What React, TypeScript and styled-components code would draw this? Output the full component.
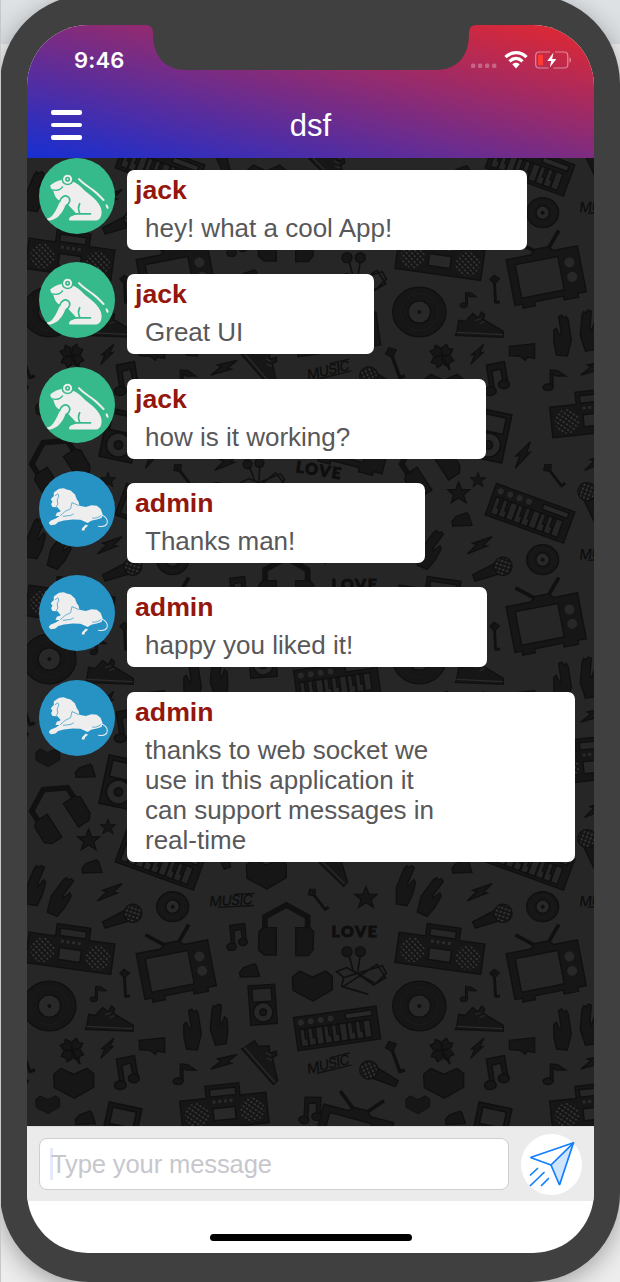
import React from "react";
import styled, { createGlobalStyle } from "styled-components";

const sans = `"Liberation Sans", Arial, Helvetica, sans-serif`;

const GlobalStyle = createGlobalStyle`
  *, *::before, *::after { box-sizing: border-box; }
  html, body { margin: 0; padding: 0; }
  body {
    width: 620px;
    height: 1282px;
    overflow: hidden;
    font-family: ${sans};
    background: linear-gradient(#dfe2e5 0, #dadde0 44px, #efefef 44px, #ededed 100%);
  }
`;

const Desktop = styled.div`
  height: 1282px;
  overflow: hidden;
  border-left: 1px solid #c6c8ca;
`;

const Device = styled.main`
  width: 620px;
  height: 1287px;
  margin: -5px 0 0 -1px;
  padding: 30px 26px 29px 27px;
  border-radius: 89px;
  background: #404040;
  box-shadow: 0 6px 24px rgba(0, 0, 0, 0.32);
`;

const Screen = styled.div`
  position: relative;
  display: flex;
  flex-direction: column;
  width: 567px;
  height: 1228px;
  overflow: hidden;
  border-radius: 61px;
  background: #fff;
`;

const Header = styled.header`
  height: 133px;
  flex: none;
  display: flex;
  flex-direction: column;
  background: linear-gradient(to top right, #162fd2, #e5282e);
  color: #fff;
`;

const StatusBar = styled.div`
  height: 67px;
  padding: 2px 21px 0 47px;
  display: flex;
  align-items: center;
  justify-content: space-between;
`;

const Clock = styled.time`
  font: 600 22px/28px Inter, sans-serif;
  letter-spacing: 0.2px;
`;

const TitleBar = styled.div`
  height: 66px;
  display: grid;
  grid-template-columns: 80px 1fr 80px;
  align-items: center;
`;

const MenuButton = styled.button`
  display: flex;
  flex-direction: column;
  gap: 8px;
  width: 31px;
  margin: 0 0 0 24px;
  padding: 0;
  border: 0;
  background: none;
`;

const MenuLine = styled.span`
  height: 4.7px;
  border-radius: 2px;
  background: #fff;
`;

const Title = styled.h1`
  margin: 1px 0 0;
  text-align: center;
  font-size: 31px;
  font-weight: 400;
`;

const Notch = styled.svg`
  position: absolute;
  top: 0;
  left: 118px;
`;

const Chat = styled.section`
  position: relative;
  height: 968px;
  flex: none;
  overflow: hidden;
  background: #262626;
`;

const Wallpaper = styled.svg`
  position: absolute;
  inset: 0;
`;

const MessageList = styled.ul`
  position: relative;
  margin: 0;
  padding: 0 0 0 12px;
  list-style: none;
`;

const MessageRow = styled.li`
  display: flex;
  align-items: flex-start;
  gap: 12px;
  margin-bottom: 12.35px;
`;

const Avatar = styled.svg`
  flex: none;
  width: 76px;
  height: 76px;
  border-radius: 50%;
`;

const Bubble = styled.div<{ $width: number }>`
  width: ${(p) => p.$width}px;
  flex: none;
  margin-top: 12px;
  padding: 5px 8px 7px;
  border-radius: 7px;
  background: #fff;
`;

const Author = styled.div`
  font-size: 26.7px;
  line-height: 30px;
  font-weight: 700;
  color: #93160f;
`;

const MessageText = styled.p`
  margin: 8px 0 0 10px;
  max-width: 310px;
  font-size: 26px;
  line-height: 30px;
  color: #58585a;
`;

const Composer = styled.form`
  height: 75px;
  flex: none;
  display: flex;
  align-items: center;
  gap: 12px;
  padding: 0 12px;
  background: #ebebeb;
  border-top: 1px solid #dcdcdc;
`;

const Field = styled.div`
  width: 470px;
  height: 52px;
  display: flex;
  align-items: center;
  padding: 0 10px;
  border: 1px solid #cfcfcf;
  border-radius: 8px;
  background: #fff;
`;

const Caret = styled.span`
  width: 3px;
  height: 32px;
  margin-right: -2px;
  background: #e4eafb;
`;

const Placeholder = styled.span`
  font-size: 25.6px;
  letter-spacing: -0.15px;
  padding-top: 1px;
  color: #c7c7cd;
`;

const SendButton = styled.button`
  width: 61px;
  height: 61px;
  flex: none;
  padding: 0;
  border: 0;
  border-radius: 50%;
  background: #fff;
`;

const HomeArea = styled.footer`
  flex: 1;
  display: flex;
  justify-content: center;
  align-items: flex-end;
  padding-bottom: 12px;
`;

const HomeIndicator = styled.div`
  width: 202px;
  height: 7.5px;
  border-radius: 4px;
  background: #000;
`;

/* ---------- wallpaper motifs, drawn around their own centre ---------- */

type Place = { x: number; y: number; r?: number; s?: number };

const at = ({ x, y, r = 0, s = 1 }: Place) => `translate(${x} ${y}) rotate(${r}) scale(${s})`;

const Vinyl = ({ size, ...p }: Place & { size: number }) => (
  <g transform={at(p)}>
    <ellipse rx={size} ry={size * 0.93} />
    <circle r={size * 0.7} fill="none" stroke="#1b1b1b" strokeWidth="3" />
    <circle r={size * 0.42} fill="#282828" />
    <circle r="4" />
  </g>
);

const Television = (p: Place) => (
  <g transform={at(p)}>
    <path d="M-20 -80L-72 -122M20 -80L62 -128" strokeWidth="11" />
    <path d="M-110 -72H-35L-18 -86H22L36 -72H108V68H82V80H38V68H-50V80H-88V68H-110Z" />
    <rect x="-86" y="-52" width="130" height="102" fill="#262626" />
    <circle cx="75" cy="-28" r="15" fill="#282828" stroke="none" />
    <circle cx="75" cy="16" r="15" fill="#282828" stroke="none" />
  </g>
);

const Boombox = (p: Place) => (
  <g transform={at(p)}>
    <path fillRule="evenodd" d="M-130 -45H-50V-82H52V-45H130V47H-130ZM-38 -70H40V-48H-38Z" />
    <circle cx="-82" r="37" cy="2" fill="url(#mesh)" stroke="none" />
    <circle cx="84" r="37" cy="2" fill="url(#mesh)" stroke="none" />
    <path d="M-32 -32H36" stroke="#2b2b2b" strokeWidth="9" strokeDasharray="9 8" />
    <rect x="-33" y="-12" width="66" height="36" fill="#282828" />
  </g>
);

const Microphone = (p: Place) => (
  <g transform={at(p)}>
    <path d="M-64 -10L15 -18V18L-64 10Z" />
    <circle cx="30" r="27" />
    <circle cx="30" r="25" fill="url(#mesh)" stroke="none" />
  </g>
);

const Keyboard = (p: Place) => (
  <g transform={at(p)}>
    <rect x="-125" y="-50" width="250" height="100" />
    <rect x="30" y="-40" width="80" height="16" fill="#282828" />
    {[-105, -75, -45, -15].map((x) => (
      <circle key={x} cx={x} cy="-32" r="9" fill="#282828" stroke="none" />
    ))}
    {[-112, -88, -64, -40, -16, 8, 32, 56, 80].map((x, i) => (
      <g key={x}>
        <rect x={x} y="-12" width="21" height="52" fill="#252525" />
        {i % 3 !== 2 && <rect x={x + 14} y="-12" width="13" height="30" />}
      </g>
    ))}
  </g>
);

const Headphones = (p: Place) => (
  <g transform={at(p)}>
    <path d="M-64 15V-45L0 -80L64 -45V15" fill="none" stroke="#111" strokeWidth="17" />
    <path d="M-82 0L-70 -12H-30V70H-66L-84 55ZM82 0L70 -12H28V72H66L80 55Z" />
  </g>
);

const Ipod = (p: Place) => (
  <g transform={at(p)}>
    <rect x="-40" y="-60" width="80" height="118" />
    <rect x="-29" y="-50" width="58" height="40" fill="#262626" />
    <circle cy="22" r="29" fill="#272727" />
    <circle cy="22" r="10" />
  </g>
);

const Shoe = (p: Place) => (
  <g transform={at(p)}>
    <path d="M-68 22L-62 -15L-42 -12L-20 -36L-3 -22L6 -40L16 -32L12 -18L72 18V36L-72 30Z" />
    <path d="M-68 21L70 28" stroke="#2b2b2b" strokeWidth="4" />
    <path d="M-12 -14L4 -20M0 -4L16 -12" stroke="#292929" strokeWidth="4" />
  </g>
);

const HandLeft = (p: Place) => (
  <path
    transform={at(p)}
    d="M-28 55L-28 5L-4 -52L4 -60L8 -54L18 -60L26 -54L6 -6L8 2L24 -18L30 -10L20 28L4 60Z"
  />
);

const HeartShape = (p: Place) => <path transform={at(p)} d="M-60 -28L-38 -46L0 -28L40 -46L60 -30V10L2 44L-58 12Z" />;

const Bolt = (p: Place) => <path transform={at(p)} d="M-36 26L-8 -2L-20 -6L38 -26L12 0L24 2Z" />;

const Beacon = (p: Place) => <path transform={at(p)} d="M-30 2L-18 -12L14 -24L20 -18L30 14L-28 16Z" />;

const Horn = (p: Place) => <path transform={at(p)} d="M-38 -14L38 -22V22L16 18L10 28L-6 16L-38 14Z" />;

const Star = (p: Place) => (
  <path transform={at(p)} d="M0 -33L9 -10L33 -10L15 6L22 29L0 15L-22 29L-15 6L-33 -10L-9 -10Z" />
);

const Key = (p: Place) => (
  <g transform={at(p)}>
    <path d="M-16 -48L0 -62L18 -48L0 -30Z" />
    <path d="M0 -34V38M2 34H16" strokeWidth="10" />
    <circle cy="-48" r="4" fill="#292929" />
  </g>
);

const TwinNote = (p: Place) => (
  <g transform={at(p)}>
    <path d="M-16 34L-22 -38L28 -44L34 22H22L16 -24L-8 -20L-4 34Z" />
    <ellipse cx="-16" cy="34" rx="16" ry="12" />
    <ellipse cx="22" cy="18" rx="15" ry="12" />
  </g>
);

const Note = (p: Place) => (
  <g transform={at(p)}>
    <path d="M-10 24V-28L12 -26L36 -10H8L-2 -16V24Z" />
    <ellipse cx="-17" cy="24" rx="15" ry="10" />
  </g>
);

const Clover = (p: Place) => (
  <g transform={at(p)}>
    {[0, 90, 180, 270].map((a) => (
      <path key={a} transform={`rotate(${a + 40})`} d="M0 0L-16 -20L-12 -36L0 -30L12 -36L16 -20Z" />
    ))}
    <path d="M0 0L24 42" strokeWidth="7" />
  </g>
);

const Tangle = (p: Place) => (
  <g transform={at(p)}>
    <circle cx="-40" cy="-60" r="15" />
    <circle cx="0" cy="-60" r="15" />
    <path
      d="M-34 -50L-22 -5M0 -50L-8 0M-74 0L-40 -12L46 36L78 4L66 -18L-50 18L-70 0M-50 18L-56 44L24 68M-50 44L50 -22L76 18L40 40L-20 -2"
      fill="none"
      strokeWidth="5"
    />
  </g>
);

const Love = (p: Place) => (
  <text
    transform={at(p)}
    textAnchor="middle"
    fontFamily="Lato, sans-serif"
    fontWeight="900"
    fontSize="47"
    stroke="#0e0e0e"
    strokeWidth="3"
    fill="#0e0e0e"
    letterSpacing="5"
  >
    LOVE
  </text>
);

const Music = (p: Place) => (
  <g transform={at(p)}>
    <text
      textAnchor="middle"
      fontFamily="Inter, sans-serif"
      fontStyle="italic"
      fontWeight="500"
      fontSize="42"
      stroke="none"
      fill="#0e0e0e"
      letterSpacing="-2"
    >
      MUSIC
    </text>
    <path d="M-40 4H68M10 -32H72" strokeWidth="4" />
  </g>
);

const Motifs = () => (
  <g id="motifs" fill="#161616" stroke="#101010" strokeWidth="4">
    <HandLeft x={26} y={92} />
    <HandLeft x={101} y={125} r={14} />
    <Beacon x={195} y={38} />
    <Bolt x={247} y={112} />
    <Microphone x={290} y={186} r={-22} />
    <Vinyl x={437} y={155} size={48} />
    <Music x={612} y={151} r={-3} />
    <HeartShape x={718} y={58} />
    <Headphones x={778} y={230} />
    <Key x={878} y={142} r={-38} s={0.8} />
    <Love x={984} y={247} />
    <Star x={1017} y={128} />
    <TwinNote x={628} y={245} s={0.9} />
    <Boombox x={129} y={294} r={8} />
    <Television x={449} y={346} r={-11} />
    <Key x={294} y={395} r={-3} s={0.85} />
    <Note x={213} y={415} s={0.75} />
    <Shoe x={247} y={493} />
    <Vinyl x={67} y={453} size={80} />
    <Tangle x={1000} y={350} />
    <Beacon x={668} y={350} />
    <HeartShape x={856} y={394} />
    <Ipod x={707} y={450} r={-4} />
    <HandLeft x={575} y={510} r={-18} />
    <g transform="scale(-1 1)">
      <HandLeft x={-497} y={525} r={-14} />
    </g>
    <Keyboard x={930} y={520} r={-8} />
    <Clover x={135} y={585} />
    <Bolt x={240} y={580} r={-22} s={0.8} />
    <HeartShape x={140} y={686} />
    <HeartShape x={62} y={750} s={0.6} />
    <TwinNote x={295} y={652} r={-4} s={1.1} />
    <Horn x={375} y={570} />
    <Note x={470} y={655} />
    <Bolt x={590} y={620} r={6} />
    <Shoe x={715} y={612} r={46} />
    <Music x={906} y={642} r={-14} />
    <Microphone x={1052} y={658} r={206} />
    <Key x={-3} y={618} r={-20} />
    <Boombox x={592} y={770} r={-6} />
    <Ipod x={280} y={825} r={12} s={1.25} />
    <Television x={978} y={845} r={15} />
    <TwinNote x={850} y={765} s={0.95} r={8} />
    <Beacon x={175} y={792} />
    <Headphones x={92} y={912} r={-33} />
    <Star x={185} y={996} />
    <Star x={243} y={957} s={0.7} />
    <Keyboard x={399} y={1057} r={20} />
    <Key x={476} y={952} r={-38} s={0.85} />
    <Bolt x={377} y={882} r={-25} />
    <Bolt x={599} y={902} />
    <Microphone x={580} y={1020} r={250} />
    <Tangle x={703} y={960} r={-6} s={0.9} />
    <Love x={874} y={944} r={9} />
    <Shoe x={920} y={1060} r={42} />
  </g>
);

const columns = [-370, 0, 370];
const rows = [-344, 3, 350, 697];

const MusicWallpaper = () => (
  <Wallpaper width="567" height="968" viewBox="0 0 567 968" aria-hidden>
    <defs>
      <pattern id="mesh" width="12" height="12" patternUnits="userSpaceOnUse" patternTransform="rotate(40)">
        <rect width="12" height="12" fill="#141414" />
        <rect width="7" height="5" fill="#383838" />
      </pattern>
      <Motifs />
    </defs>
    {rows.map((y) =>
      columns.map((x) => (
        <use key={`${x}:${y}`} href="#motifs" transform={`translate(${x} ${y}) scale(0.33333)`} />
      ))
    )}
  </Wallpaper>
);

/* ---------- avatars ---------- */

const FrogAvatar = () => (
  <Avatar viewBox="27 24 226 226" aria-label="jack">
    <rect x="27" y="24" width="226" height="226" fill="#36ba8b" />
    <path
      fill="#eeeeee"
      d="M60 107C66 99 80 93 97 88C104 78 121 80 126 94C138 97 150 108 164 122C184 138 212 158 213 182C214 202 205 210 192 210H119C114 209 116 202 122 198L140 191L113 162L106 163C98 186 84 203 66 208C58 210 50 212 49 205C56 203 64 200 69 192C77 181 85 164 90 151C80 148 73 137 70 122C66 120 64 116 62 112Z"
    />
    <path d="M67 119C82 122 92 118 97 110" fill="none" stroke="#36ba8b" strokeWidth="4" strokeLinecap="round" />
    <path
      d="M88 154C92 140 103 133 113 139C123 147 118 158 110 164M148 160C143 169 144 180 149 190M122 190H180"
      fill="none"
      stroke="#36ba8b"
      strokeWidth="5"
      strokeLinecap="round"
    />
    <circle cx="112" cy="87" r="18" fill="#36ba8b" />
    <circle cx="112" cy="87" r="10.500" fill="none" stroke="#eeeeee" strokeWidth="6" />
    <circle cx="112" cy="87" r="2.500" fill="#eeeeee" />
    <path
      d="M146 87C158 101 179 112 193 124C203 132 211 141 219 149M228 165L231 172"
      fill="none"
      stroke="#eeeeee"
      strokeWidth="6"
      strokeLinecap="round"
    />
  </Avatar>
);

const LionAvatar = () => (
  <Avatar viewBox="27 18 226 226" aria-label="admin">
    <rect x="27" y="18" width="226" height="226" fill="#2793c4" />
    <path
      fill="#eeeeee"
      d="M71 82L79 76L87 71L101 69L109 73L121 76L134 88L139 101L145 110L147 121L166 125L183 120L199 121L210 130L216 146L213 158L199 162L182 166L172 173L150 163L127 162L101 165L84 170L76 177L62 179L56 173L61 166L77 159L88 152L76 152L80 142L92 138L82 126L67 125L63 117L67 109L62 103L67 96L71 93Z"
    />
    <path d="M166 177L173 181L164 188L162 195L154 195L155 188Z" fill="#eeeeee" />
    <path
      d="M214 149C226 154 234 164 229 175C225 183 214 184 204 182"
      fill="none"
      stroke="#eeeeee"
      strokeWidth="3"
      strokeLinecap="round"
    />
    <path
      d="M74 92L83 86L86 93L81 104L83 116L78 125M125 112L121 130L105 138L90 151M125 112L146 121M98 153L122 150L130 145M185 158C194 160 204 156 212 150"
      fill="none"
      stroke="#2793c4"
      strokeWidth="2"
    />
  </Avatar>
);

/* ---------- status icons ---------- */

const StatusIcons = () => (
  <svg width="103" height="24" viewBox="0 0 103 24" aria-hidden>
    <g fill="#fff" fillOpacity="0.28">
      <rect x="1" y="15.500" width="4.400" height="4.600" rx="1.600" />
      <rect x="8" y="15.500" width="4.400" height="4.600" rx="1.600" />
      <rect x="15" y="15.500" width="4.400" height="4.600" rx="1.600" />
      <rect x="22" y="15.500" width="4.400" height="4.600" rx="1.600" />
    </g>
    <g fill="none" stroke="#fff" strokeWidth="3.300">
      <path d="M35.500 9.200C41.500 3.100 50.500 3.100 56.500 9.200" />
      <path d="M39.500 13.400C43.500 9.500 48.500 9.500 52.500 13.400" />
    </g>
    <path d="M42.300 16.300C44.500 14.300 47.500 14.300 49.700 16.300L46 20.500Z" fill="#fff" />
    <path
      d="M80 4H69.500Q65.700 4 65.700 7.800V16.200Q65.700 20 69.500 20H78.500M85 4H94Q97.800 4 97.800 7.800V16.200Q97.800 20 94 20H83.500"
      fill="none"
      stroke="#fff"
      strokeOpacity="0.45"
      strokeWidth="1.200"
    />
    <path d="M99.500 9Q102.500 12 99.500 15Z" fill="#fff" fillOpacity="0.5" />
    <rect x="68" y="6.500" width="5" height="11" rx="1.600" fill="#fd3b32" />
    <path d="M83.500 4.500L77.300 13H81.200L79.800 19.500L86.300 11H82.200Z" fill="#fff" />
  </svg>
);

const SendIcon = () => (
  <svg width="61" height="61" viewBox="0 0 61 61" aria-hidden>
    <path d="M52.500 9L30 31L38.500 51Z" fill="#cfe5fd" />
    <g fill="none" stroke="#117efc" strokeWidth="1.700" strokeLinejoin="bevel" strokeLinecap="round">
      <path d="M52.500 8.800L9.500 23.500L30 31L38.500 51Z" />
      <path d="M52.500 8.800L30 31" />
      <path d="M9.500 41L16.500 34.500M9.500 51.500L23 38.500M20.500 51.500L27.500 44.500" />
    </g>
  </svg>
);

const messages = [
  { author: "jack", text: "hey! what a cool App!", width: 400 },
  { author: "jack", text: "Great UI", width: 247 },
  { author: "jack", text: "how is it working?", width: 359 },
  { author: "admin", text: "Thanks man!", width: 298 },
  { author: "admin", text: "happy you liked it!", width: 360 },
  {
    author: "admin",
    text: "thanks to web socket we use in this application it can support messages in real-time",
    width: 448,
  },
];

export default function App() {
  return (
    <Desktop>
      <GlobalStyle />
      <Device>
        <Screen>
          <Header>
            <StatusBar>
              <Clock>9:46</Clock>
              <StatusIcons />
            </StatusBar>
            <TitleBar>
              <MenuButton aria-label="Menu">
                <MenuLine />
                <MenuLine />
                <MenuLine />
              </MenuButton>
              <Title>dsf</Title>
            </TitleBar>
          </Header>
          <Chat>
            <MusicWallpaper />
            <MessageList>
              {messages.map((m) => (
                <MessageRow key={m.text}>
                  {m.author === "jack" ? <FrogAvatar /> : <LionAvatar />}
                  <Bubble $width={m.width}>
                    <Author>{m.author}</Author>
                    <MessageText>{m.text}</MessageText>
                  </Bubble>
                </MessageRow>
              ))}
            </MessageList>
          </Chat>
          <Composer>
            <Field>
              <Caret />
              <Placeholder>Type your message</Placeholder>
            </Field>
            <SendButton type="button" aria-label="Send">
              <SendIcon />
            </SendButton>
          </Composer>
          <HomeArea>
            <HomeIndicator />
          </HomeArea>
          <Notch width="332" height="46" viewBox="0 0 332 46" aria-hidden>
            <path d="M0 0C6 0 8 3 8 8C8 32 20 45 42 45H290C312 45 324 32 324 8C324 3 326 0 332 0Z" fill="#404040" />
          </Notch>
        </Screen>
      </Device>
    </Desktop>
  );
}
